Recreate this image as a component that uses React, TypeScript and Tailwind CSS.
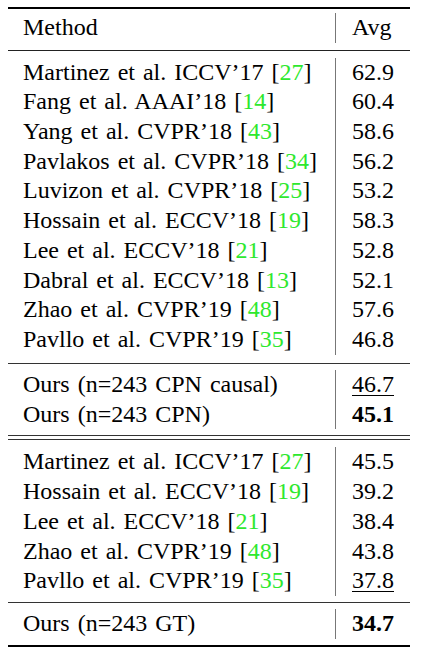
type Row = { name: string; cite?: string; avg: string; style?: 'bold' | 'under' };

const group1: Row[] = [
  { name: 'Martinez et al. ICCV’17', cite: '27', avg: '62.9' },
  { name: 'Fang et al. AAAI’18', cite: '14', avg: '60.4' },
  { name: 'Yang et al. CVPR’18', cite: '43', avg: '58.6' },
  { name: 'Pavlakos et al. CVPR’18', cite: '34', avg: '56.2' },
  { name: 'Luvizon et al. CVPR’18', cite: '25', avg: '53.2' },
  { name: 'Hossain et al. ECCV’18', cite: '19', avg: '58.3' },
  { name: 'Lee et al. ECCV’18', cite: '21', avg: '52.8' },
  { name: 'Dabral et al. ECCV’18', cite: '13', avg: '52.1' },
  { name: 'Zhao et al. CVPR’19', cite: '48', avg: '57.6' },
  { name: 'Pavllo et al. CVPR’19', cite: '35', avg: '46.8' },
];

const group2: Row[] = [
  { name: 'Ours (n=243 CPN causal)', avg: '46.7', style: 'under' },
  { name: 'Ours (n=243 CPN)', avg: '45.1', style: 'bold' },
];

const group3: Row[] = [
  { name: 'Martinez et al. ICCV’17', cite: '27', avg: '45.5' },
  { name: 'Hossain et al. ECCV’18', cite: '19', avg: '39.2' },
  { name: 'Lee et al. ECCV’18', cite: '21', avg: '38.4' },
  { name: 'Zhao et al. CVPR’19', cite: '48', avg: '43.8' },
  { name: 'Pavllo et al. CVPR’19', cite: '35', avg: '37.8', style: 'under' },
];

const group4: Row[] = [{ name: 'Ours (n=243 GT)', avg: '34.7', style: 'bold' }];

function TableRow({ row }: { row: Row }) {
  return (
    <div className="flex h-[29.7px] leading-[29.7px]">
      <div className="w-[327px] pl-[15px] whitespace-nowrap [word-spacing:2px]">
        {row.name}
        {row.cite && (
          <>
            {' '}[<span className="text-[#2ee82e]">{row.cite}</span>]
          </>
        )}
      </div>
      <div className="flex-1 border-l border-[#777] pl-[16px]">
        <span
          className={
            row.style === 'bold'
              ? 'font-bold'
              : row.style === 'under'
                ? 'underline decoration-1 underline-offset-[3px]'
                : ''
          }
        >
          {row.avg}
        </span>
      </div>
    </div>
  );
}

function Group({ rows, pad }: { rows: Row[]; pad: string }) {
  return (
    <div className={pad}>
      {rows.map((r, i) => (
        <TableRow key={i} row={r} />
      ))}
    </div>
  );
}

export default function App() {
  return (
    <div className="min-h-screen bg-white pt-[7px] pl-[8px] text-black [font-family:Liberation_Serif,serif] text-[24px]">
      <div className="w-[402px]">
        <div className="h-[2px] bg-black" />
        <div className="pt-[4px] pb-[7px]">
          <div className="flex h-[29.7px] leading-[29.7px]">
            <div className="w-[327px] pl-[15px]">Method</div>
            <div className="flex-1 border-l border-[#777] pl-[16px]">Avg</div>
          </div>
        </div>
        <div className="h-px bg-[#222]" />
        <Group rows={group1} pad="pt-[7px] pb-[8px]" />
        <div className="h-px bg-[#333]" />
        <Group rows={group2} pad="pt-[6.5px] pb-[6px]" />
        <div className="h-px bg-[#333]" />
        <div className="h-[3px]" />
        <div className="h-px bg-[#333]" />
        <Group rows={group3} pad="pt-[7px] pb-[6.5px]" />
        <div className="h-px bg-[#333]" />
        <Group rows={group4} pad="pt-[6px] pb-[6.3px]" />
        <div className="h-[2px] bg-black" />
      </div>
    </div>
  );
}
